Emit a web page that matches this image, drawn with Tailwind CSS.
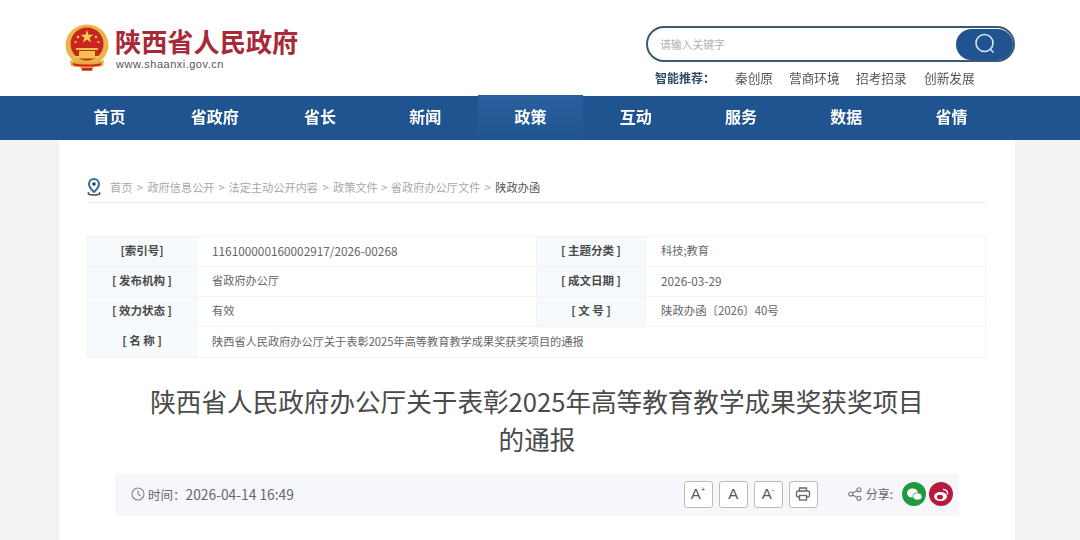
<!DOCTYPE html>
<html lang="zh-CN">
<head>
    <meta charset="UTF-8">
    <title>陕西省人民政府办公厅关于表彰2025年高等教育教学成果奖获奖项目的通报</title>
    <script src="https://cdn.jsdelivr.net/npm/@tailwindcss/browser@4"></script>
</head>
<body class="w-[1080px] h-[540px] overflow-hidden bg-[#f2f2f2] font-['Noto_Sans_CJK_SC','Noto_Sans',sans-serif] text-[#555] blur-[0.4px]">
    <!-- header -->
    <header class="h-[96px] bg-white flex justify-between pl-[65px] pr-[65px]">
        <div class="flex items-start pt-[24px]">
            <svg class="w-[44px] h-[48px]" viewBox="0 0 44 48">
                <ellipse cx="22" cy="21" rx="21.500" ry="20.500" fill="#e9b44c"/>
                <ellipse cx="22" cy="20" rx="16.500" ry="16.500" fill="#c8261f"/>
                <polygon points="22,6 23.6,10.8 28.6,10.8 24.6,13.8 26.1,18.6 22,15.6 17.9,18.6 19.4,13.8 15.4,10.8 20.4,10.8" fill="#f5cf52"/>
                <circle cx="13" cy="13" r="1.300" fill="#f5cf52"/>
                <circle cx="31" cy="13" r="1.300" fill="#f5cf52"/>
                <circle cx="10.500" cy="18" r="1.100" fill="#f5cf52"/>
                <circle cx="33.500" cy="18" r="1.100" fill="#f5cf52"/>
                <path d="M11 24h22v2H11zM14 27h16v5H14zM9 32h26v2.500H9z" fill="#f2c14e"/>
                <path d="M5 36c5 3 29 3 34 0l-1 6c-3 1-6 1-9 1l-2 4h-10l-2-4c-3 0-6 0-9-1z" fill="#e9a93c"/>
                <path d="M8 39c6 2 22 2 28 0v2c-6 2-22 2-28 0z" fill="#c8261f"/>
                <path d="M17 44h10v2.500H17z" fill="#c8261f"/>
            </svg>
            <div class="ml-[6px]">
                <div class="text-[26.200px] leading-[36px] font-bold text-[#a72a38] h-[36px] mt-[-1px]">陕西省人民政府</div>
                <div class="text-[11px] leading-[14px] tracking-[0.5px] text-[#555] mt-[-2px] pl-[1px] font-['Liberation_Sans',sans-serif]">www.shaanxi.gov.cn</div>
            </div>
        </div>
        <div class="w-[369px] pt-[26px]">
            <div class="h-[36px] rounded-full border-2 border-[#3b5a70] bg-white flex items-center justify-between pl-[12px]">
                <span class="text-[10.800px] text-[#b0b0b0]">请输入关键字</span>
                <span class="w-[57px] h-[31px] rounded-full bg-[#1f5490] flex items-center justify-center">
                    <svg class="w-[24px] h-[24px]" viewBox="0 0 24 24" fill="none" stroke="#d8e6f2" stroke-width="1.600">
                        <circle cx="11.500" cy="11" r="8.500"/>
                        <path d="M17.500 17.500l3 3"/>
                    </svg>
                </span>
            </div>
            <div class="flex mt-[7px] text-[12.700px] leading-[18px] text-[#555] pl-[9px]">
                <span class="w-[80px] text-[12px] font-bold text-[#2f4a63]">智能推荐：</span>
                <span class="w-[54px]">秦创原</span>
                <span class="w-[67px]">营商环境</span>
                <span class="w-[68px]">招考招录</span>
                <span>创新发展</span>
            </div>
        </div>
    </header>

    <!-- nav -->
    <nav class="h-[44px] bg-[#1f5490] flex pl-[57px] text-white text-[16px] font-bold">
        <a class="w-[105.250px] flex items-center justify-center pb-[4px]">首页</a>
        <a class="w-[105.250px] flex items-center justify-center pb-[4px]">省政府</a>
        <a class="w-[105.250px] flex items-center justify-center pb-[4px]">省长</a>
        <a class="w-[105.250px] flex items-center justify-center pb-[4px]">新闻</a>
        <a class="w-[105.250px] h-[45px] mt-[-1px] bg-linear-to-b from-[#2a5f9f] to-[#20568f] flex items-center justify-center pb-[4px]">政策</a>
        <a class="w-[105.250px] flex items-center justify-center pb-[4px]">互动</a>
        <a class="w-[105.250px] flex items-center justify-center pb-[4px]">服务</a>
        <a class="w-[105.250px] flex items-center justify-center pb-[4px]">数据</a>
        <a class="w-[105.250px] flex items-center justify-center pb-[4px]">省情</a>
    </nav>

    <!-- content -->
    <main class="w-[956px] ml-[59px] h-[400px] bg-white px-[28px]">
        <div class="pt-[38px] h-[63px] border-b border-[#f0f0f0] flex items-start text-[11.200px] leading-[18px] text-[#a8a8a8]">
            <svg class="w-[14px] h-[18px] mr-[9px]" viewBox="0 0 14 18">
                <path d="M7 1a5 5 0 0 1 5 5c0 3.500-5 8-5 8s-5-4.500-5-8a5 5 0 0 1 5-5z" fill="none" stroke="#2f6aa8" stroke-width="2"/>
                <circle cx="7" cy="6" r="1.800" fill="#2a3f58"/>
                <path d="M2 14.500c-1.500 1-1 2.500 5 2.500s6.500-1.500 5-2.500" fill="none" stroke="#3d4f63" stroke-width="1.600"/>
            </svg>
            <span>首页</span>
            <span class="w-[15px] text-center">&gt;</span>
            <span>政府信息公开</span>
            <span class="w-[14px] text-center">&gt;</span>
            <span>法定主动公开内容</span>
            <span class="w-[15px] text-center">&gt;</span>
            <span>政策文件</span>
            <span class="w-[13px] text-center">&gt;</span>
            <span>省政府办公厅文件</span>
            <span class="w-[15px] text-center">&gt;</span>
            <span class="text-[#555]">陕政办函</span>
        </div>

        <table class="mt-[33px] w-[898px] table-fixed border-collapse text-[11.200px] text-[#666]">
            <colgroup>
                <col class="w-[109px]"><col class="w-[340px]"><col class="w-[109px]"><col class="w-[340px]">
            </colgroup>
            <tbody>
                <tr class="h-[30px]">
                    <th class="border border-[#f1f3f5] bg-[#f6fafc] pb-[2px] text-[11.500px] font-bold text-[#4a4a4a]">[索引号]</th>
                    <td class="border border-[#f1f3f5] pb-[2px] pl-[15px] text-[11.800px]">116100000160002917/2026-00268</td>
                    <th class="border border-[#f1f3f5] bg-[#f6fafc] pb-[2px] text-[11.500px] font-bold text-[#4a4a4a]">[ 主题分类 ]</th>
                    <td class="border border-[#f1f3f5] pb-[2px] pl-[15px]">科技;教育</td>
                </tr>
                <tr class="h-[30px]">
                    <th class="border border-[#f1f3f5] bg-[#f6fafc] pb-[2px] text-[11.500px] font-bold text-[#4a4a4a]">[ 发布机构 ]</th>
                    <td class="border border-[#f1f3f5] pb-[2px] pl-[15px]">省政府办公厅</td>
                    <th class="border border-[#f1f3f5] bg-[#f6fafc] pb-[2px] text-[11.500px] font-bold text-[#4a4a4a]">[ 成文日期 ]</th>
                    <td class="border border-[#f1f3f5] pb-[2px] pl-[15px] text-[11.800px]">2026-03-29</td>
                </tr>
                <tr class="h-[30px]">
                    <th class="border border-[#f1f3f5] bg-[#f6fafc] pb-[2px] text-[11.500px] font-bold text-[#4a4a4a]">[ 效力状态 ]</th>
                    <td class="border border-[#f1f3f5] pb-[2px] pl-[15px]">有效</td>
                    <th class="border border-[#f1f3f5] bg-[#f6fafc] pb-[2px] text-[11.500px] font-bold text-[#4a4a4a]">[ 文 号 ]</th>
                    <td class="border border-[#f1f3f5] pb-[2px] pl-[15px] text-[11.400px]">陕政办函〔2026〕40号</td>
                </tr>
                <tr class="h-[31px]">
                    <th class="border border-[#f1f3f5] bg-[#f6fafc] pb-[2px] text-[11.500px] font-bold text-[#4a4a4a]">[ 名 称 ]</th>
                    <td colspan="3" class="border border-[#f1f3f5] pb-[2px] pl-[15px]">陕西省人民政府办公厅关于表彰2025年高等教育教学成果奖获奖项目的通报</td>
                </tr>
            </tbody>
        </table>

        <h1 class="mt-[24px] mx-auto w-[790px] text-center text-[25.600px] leading-[38px] font-normal text-[#4a4a4a]">陕西省人民政府办公厅关于表彰2025年高等教育教学成果奖获奖项目的通报</h1>

        <div class="mt-[16px] mx-[28px] h-[42px] bg-[#f6f7fb] flex items-center pl-[16px] pr-[6px] pb-[2px]">
            <svg class="w-[14px] h-[14px] mr-[3px]" viewBox="0 0 14 14" fill="none" stroke="#888" stroke-width="1.100">
                <circle cx="7" cy="7" r="6"/>
                <path d="M7 3.500V7l2.500 2"/>
            </svg>
            <span class="text-[12.500px] text-[#666]">时间：<span class="text-[13.800px]">2026-04-14 16:49</span></span>
            <div class="ml-auto flex items-center">
                <span class="w-[29px] h-[27px] rounded-[3px] border border-[#bbb] bg-white flex items-center justify-center text-[15px] text-[#555] font-['Liberation_Sans',sans-serif]">A<sup class="text-[8px]">+</sup></span>
                <span class="ml-[6px] w-[29px] h-[27px] rounded-[3px] border border-[#bbb] bg-white flex items-center justify-center text-[15px] text-[#555] font-['Liberation_Sans',sans-serif]">A</span>
                <span class="ml-[6px] w-[29px] h-[27px] rounded-[3px] border border-[#bbb] bg-white flex items-center justify-center text-[15px] text-[#555] font-['Liberation_Sans',sans-serif]">A<sup class="text-[8px]">-</sup></span>
                <span class="ml-[6px] w-[29px] h-[27px] rounded-[3px] border border-[#bbb] bg-white flex items-center justify-center">
                    <svg class="w-[16px] h-[16px]" viewBox="0 0 16 16" fill="none" stroke="#666" stroke-width="1.300">
                        <path d="M4.500 5V2h7v3"/>
                        <rect x="1.500" y="5" width="13" height="6" rx="1.500"/>
                        <rect x="4.500" y="9.500" width="7" height="4.500" fill="#fff"/>
                    </svg>
                </span>
                <svg class="ml-[30px] w-[14px] h-[14px]" viewBox="0 0 14 14" fill="none" stroke="#777" stroke-width="1.100">
                    <circle cx="2.800" cy="7" r="2"/><circle cx="11" cy="2.800" r="2"/><circle cx="11" cy="11.200" r="2"/>
                    <path d="M4.600 6l4.600-2.400M4.600 8l4.600 2.400"/>
                </svg>
                <span class="ml-[4px] text-[12px] text-[#666]">分享:</span>
                <span class="ml-[9px] w-[24px] h-[24px] rounded-full bg-[#1f9a3c] flex items-center justify-center">
                    <svg class="w-[17px] h-[17px]" viewBox="0 0 17 17" fill="#fff">
                        <ellipse cx="6.500" cy="7" rx="5.500" ry="4.500"/>
                        <ellipse cx="11.500" cy="10.500" rx="4.500" ry="3.600" stroke="#1f9a3c" stroke-width="0.800"/>
                    </svg>
                </span>
                <span class="ml-[3px] w-[24px] h-[24px] rounded-full bg-[#b8193f] flex items-center justify-center">
                    <svg class="w-[17px] h-[17px]" viewBox="0 0 17 17">
                        <ellipse cx="7.500" cy="10.500" rx="6.500" ry="4.500" fill="#fff"/>
                        <ellipse cx="7" cy="11" rx="3" ry="2.300" fill="#b8193f"/>
                        <path d="M10 3.500a4 4 0 0 1 4.500 5" fill="none" stroke="#fff" stroke-width="1.500"/>
                    </svg>
                </span>
            </div>
        </div>
    </main>
</body>
</html>
